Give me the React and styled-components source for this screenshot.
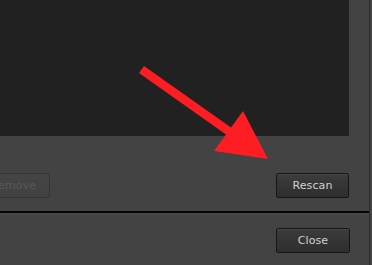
import React from "react";
import styled, { createGlobalStyle } from "styled-components";

const GlobalStyle = createGlobalStyle`
  html, body {
    margin: 0;
    padding: 0;
    background: #434343;
    overflow: hidden;
  }
  #root {
    width: 372px;
    height: 265px;
  }
`;

const Screen = styled.div`
  position: relative;
  width: 372px;
  height: 265px;
  overflow: hidden;
  background: #434343;
  font-family: "DejaVu Sans", "Liberation Sans", sans-serif;
`;

const Window = styled.div`
  width: 400px;
  height: 265px;
  margin-left: -30px;
  box-sizing: border-box;
  border-right: 1px solid #2c2c2c;
  display: flex;
  flex-direction: column;
`;

const ListSection = styled.section`
  box-sizing: border-box;
  padding: 0 20px 0 7px;
  display: flex;
  flex-direction: column;
`;

const ListBox = styled.div`
  height: 136px;
  background: #212121;
`;

const ButtonRow = styled.div`
  display: flex;
  align-items: center;
  justify-content: space-between;
  margin-top: 37px;
  height: 25px;
`;

const Divider = styled.div`
  margin-top: 13px;
  height: 2px;
  background: #050505;
  border-bottom: 1px solid #4a4a4a;
`;

const Footer = styled.footer`
  flex: 1;
  display: flex;
  justify-content: flex-end;
  padding: 14px 19px 0 0;
`;

const Button = styled.button`
  box-sizing: border-box;
  width: ${(p) => p.$w || 73}px;
  height: 25px;
  padding: 0;
  border-radius: 2px;
  font-family: inherit;
  font-size: 11px;
  letter-spacing: 0.1px;
  cursor: default;
  border: 1px solid ${(p) => (p.disabled ? "#343434" : "#161616")};
  color: ${(p) => (p.disabled ? "#585858" : "#d2d2d2")};
  background: ${(p) =>
    p.disabled
      ? "linear-gradient(#454545, #414141)"
      : "linear-gradient(#3c3c3c, #2e2e2e)"};
  box-shadow: ${(p) =>
    p.disabled ? "none" : "inset 0 1px 0 rgba(255,255,255,0.06)"};
`;

const Arrow = styled.svg`
  position: absolute;
  left: 0;
  top: 0;
  pointer-events: none;
`;

export default function App() {
  return (
    <>
      <GlobalStyle />
      <Screen>
        <Window>
          <ListSection>
            <ListBox />
            <ButtonRow>
              <Button disabled>Remove</Button>
              <Button>Rescan</Button>
            </ButtonRow>
          </ListSection>
          <Divider />
          <Footer>
            <Button $w={74}>Close</Button>
          </Footer>
        </Window>
        <Arrow width="372" height="265" viewBox="0 0 372 265">
          <polygon
            points="144,66 231,127.5 243,111 268,159 214,151 226,134.5 139,73"
            fill="#fe1d23"
          />
        </Arrow>
      </Screen>
    </>
  );
}
